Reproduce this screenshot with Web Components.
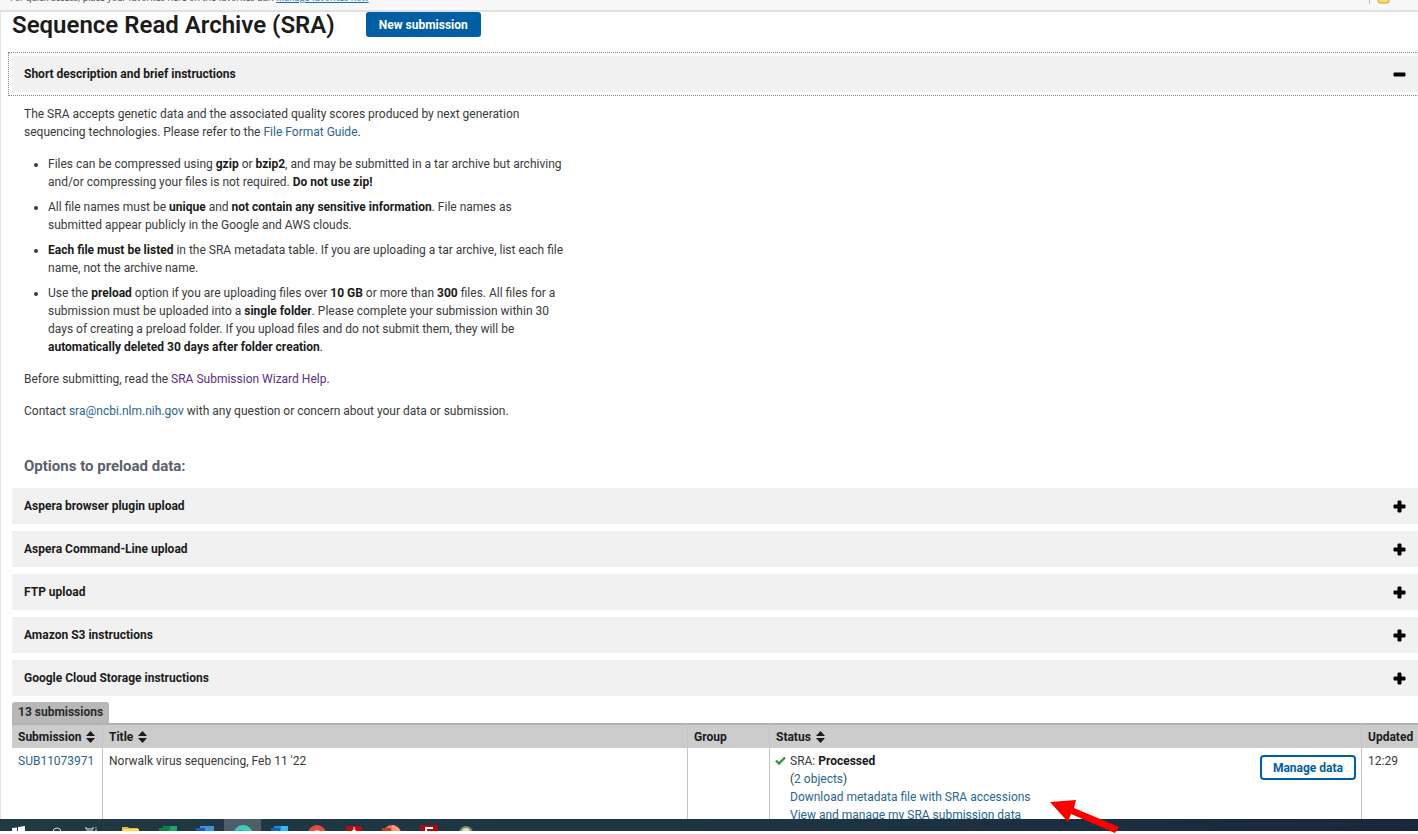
<!DOCTYPE html>
<html lang="en">
<head>
<meta charset="utf-8">
<title>Sequence Read Archive (SRA)</title>
<meta name="viewport" content="width=device-width, initial-scale=1">
<style>
  :root {
    --color-text: #3a3a3a;
    --color-strong: #1b1b1b;
    --color-link: #2a6591;
    --color-primary: #005ea2;
    --color-surface: #f1f1f1;
  }
  body {
    margin: 0;
    background: #fff;
    color: var(--color-text);
    font: 12px/18px Roboto, "Liberation Sans", sans-serif;
  }
</style>
</head>
<body>
<app-window>
  <favorites-bar slot="top"></favorites-bar>
  <page-header heading="Sequence Read Archive (SRA)" action="New submission"></page-header>
  <accordion-item label="Short description and brief instructions" open focused>
    <sra-instructions></sra-instructions>
  </accordion-item>
  <preload-options></preload-options>
  <submissions-table></submissions-table>
  <task-bar slot="bottom"></task-bar>
</app-window>

<script>
const makeTemplate = (html) => {
  const template = document.createElement('template');
  template.innerHTML = html;
  return template;
};

class BaseElement extends HTMLElement {
  constructor() {
    super();
    this.attachShadow({ mode: 'open' });
    this.shadowRoot.appendChild(this.constructor.template.content.cloneNode(true));
  }
}

class AppWindow extends BaseElement {
  static template = makeTemplate(`
<style>
  :host {
    position: relative;
    display: flex;
    flex-direction: column;
    height: 100vh;
    overflow: hidden;
  }
  main {
    flex: 1;
    min-height: 0;
    overflow: hidden;
    padding-left: 11px;
    border-left: 1px solid #e4e4e4;
  }
  .pointer {
    position: absolute;
    left: 1050px;
    bottom: 0;
    width: 70px;
    height: 35px;
  }
</style>
<slot name="top"></slot>
<main><slot></slot></main>
<slot name="bottom"></slot>
<svg class="pointer" viewBox="0 0 70 35" aria-hidden="true">
  <path d="M0 3 26 1 24 9 69 28 65 34 21 15 18 23Z" fill="#fe0000"/>
</svg>
`);
}

class FavoritesBar extends BaseElement {
  static template = makeTemplate(`
<style>
  :host {
    display: flex;
    align-items: flex-end;
    justify-content: space-between;
    box-sizing: border-box;
    height: 12px;
    padding: 0 0 6px 10px;
    overflow: hidden;
    background: #f7f7f7;
    border-bottom: 2px solid #dfe1e1;
    color: #444;
    font: 9px/12px "Open Sans", sans-serif;
    white-space: nowrap;
  }
  a { color: #1a6fc0; }
  .other {
    display: flex;
    align-items: flex-end;
    width: 49px;
    overflow: hidden;
    gap: 7px;
  }
  .other i {
    width: 1px;
    height: 12px;
    background: #b5b5b5;
  }
  svg { flex: none; }
</style>
<span>For quick access, place your favorites here on the favorites bar. <a href="#">Manage favorites now</a></span>
<span class="other">
  <i></i>
  <svg width="13" height="12" viewBox="0 0 13 12" aria-hidden="true"><path d="M1 1H5L7 3H12V9Q12 11 10 11H3Q1 11 1 9Z" fill="#f7dc6f" stroke="#c9a227"/></svg>
</span>
`);
}

class PageHeader extends BaseElement {
  static template = makeTemplate(`
<style>
  :host {
    display: flex;
    align-items: center;
    gap: 31px;
    height: 25px;
    margin-bottom: 19px;
  }
  h1 {
    margin: 0;
    color: var(--color-strong);
    font-size: 24px;
    font-weight: 600;
    line-height: 24px;
  }
  button {
    height: 25px;
    padding: 0 13px;
    border: none;
    border-radius: 3px;
    background: var(--color-primary);
    color: #fff;
    font: bold 12px/24px Roboto, sans-serif;
    cursor: pointer;
  }
</style>
<h1></h1>
<button type="button"></button>
`);

  connectedCallback() {
    this.shadowRoot.querySelector('h1').textContent = this.getAttribute('heading');
    this.shadowRoot.querySelector('button').textContent = this.getAttribute('action');
  }
}

class AccordionItem extends BaseElement {
  static template = makeTemplate(`
<style>
  :host { display: block; }
  button {
    display: flex;
    align-items: center;
    justify-content: space-between;
    width: 100%;
    height: 36px;
    padding: 0 12px;
    border: none;
    background: var(--color-surface);
    color: var(--color-strong);
    font: bold 12px/18px Roboto, sans-serif;
    text-align: left;
    cursor: pointer;
  }
  :host([focused]) button {
    outline: 1px dotted #888;
    outline-offset: 3px;
  }
  .minus { display: none; }
  :host([open]) .minus { display: block; }
  :host([open]) .plus { display: none; }
  .panel {
    display: none;
    padding: 13px 12px 12px;
  }
  :host([open]) .panel { display: block; }
</style>
<button type="button">
  <span></span>
  <svg width="13" height="13" viewBox="0 0 13 13" aria-hidden="true">
    <path class="plus" d="M5 1H8V5H12V8H8V12H5V8H1V5H5Z" stroke="#000" stroke-linejoin="round"/>
    <path class="minus" d="M1 5H12V8H1Z" stroke="#000" stroke-linejoin="round"/>
  </svg>
</button>
<div class="panel"><slot></slot></div>
`);

  connectedCallback() {
    const button = this.shadowRoot.querySelector('button');
    this.shadowRoot.querySelector('span').textContent = this.getAttribute('label');
    button.setAttribute('aria-expanded', this.hasAttribute('open'));
    button.addEventListener('click', () => {
      button.setAttribute('aria-expanded', this.toggleAttribute('open'));
    });
  }
}

class SraInstructions extends BaseElement {
  static template = makeTemplate(`
<style>
  :host {
    display: block;
    max-width: 542px;
  }
  p { margin: 0 0 14px; }
  ul {
    display: flex;
    flex-direction: column;
    gap: 7px;
    margin: 0 0 14px;
    padding-left: 24px;
  }
  b { color: var(--color-strong); }
  a {
    color: var(--color-link);
    text-decoration: none;
  }
  .visited { color: #5b2d87; }
</style>
<p>The SRA accepts genetic data and the associated quality scores produced by next generation sequencing technologies. Please refer to the <a href="#">File Format Guide</a>.</p>
<ul>
  <li>Files can be compressed using <b>gzip</b> or <b>bzip2</b>, and may be submitted in a tar archive but archiving and/or compressing your files is not required. <b>Do not use zip!</b></li>
  <li>All file names must be <b>unique</b> and <b>not contain any sensitive information</b>. File names as submitted appear publicly in the Google and AWS clouds.</li>
  <li><b>Each file must be listed</b> in the SRA metadata table. If you are uploading a tar archive, list each file name, not the archive name.</li>
  <li>Use the <b>preload</b> option if you are uploading files over <b>10 GB</b> or more than <b>300</b> files. All files for a submission must be uploaded into a <b>single folder</b>. Please complete your submission within 30 days of creating a preload folder. If you upload files and do not submit them, they will be <b>automatically deleted 30 days after folder creation</b>.</li>
</ul>
<p>Before submitting, read the <a class="visited" href="#">SRA Submission Wizard Help</a>.</p>
<p>Contact <a href="#">sra@ncbi.nlm.nih.gov</a> with any question or concern about your data or submission.</p>
`);
}

class PreloadOptions extends BaseElement {
  static template = makeTemplate(`
<style>
  :host {
    display: flex;
    flex-direction: column;
    gap: 7px;
    padding-top: 10px;
  }
  h2 {
    margin: 0 12px 5px;
    color: #5b616b;
    font-size: 15px;
    font-weight: bold;
    line-height: 20px;
  }
</style>
<h2>Options to preload data:</h2>
<accordion-item label="Aspera browser plugin upload"></accordion-item>
<accordion-item label="Aspera Command-Line upload"></accordion-item>
<accordion-item label="FTP upload"></accordion-item>
<accordion-item label="Amazon S3 instructions"></accordion-item>
<accordion-item label="Google Cloud Storage instructions"></accordion-item>
`);
}

const sortIcon = `
<svg width="9" height="12" viewBox="0 0 9 12" aria-hidden="true"><path d="M4.5 0 9 5H0ZM4.5 12 0 7H9Z" fill="#1b1b1b"/></svg>`;

class SubmissionsTable extends BaseElement {
  static template = makeTemplate(`
<style>
  :host {
    display: block;
    margin-top: 6px;
  }
  .count {
    width: fit-content;
    padding: 1px 6px 2px;
    border-radius: 3px 3px 0 0;
    background: #b8b8b8;
    color: #2b2b2b;
    font-weight: bold;
  }
  table {
    width: 100%;
    border-collapse: separate;
    border-spacing: 0;
    table-layout: fixed;
  }
  th {
    height: 23px;
    padding: 0 6px;
    background: #ccc;
    border-top: 2px solid #b1b1b1;
    color: #1b1b1b;
    text-align: left;
  }
  th svg {
    margin-left: 2px;
    vertical-align: -2px;
  }
  td {
    height: 90px;
    padding: 4px 6px;
    vertical-align: top;
  }
  th + th, td + td { border-left: 1px solid #c4c4c4; }
  .id { width: 78px; }
  .group { width: 69px; }
  .status { width: 579px; }
  .updated { width: 44px; }
  a {
    color: var(--color-link);
    text-decoration: none;
  }
  .job {
    display: grid;
    grid-template-columns: 10px 1fr auto;
    gap: 5px;
    margin: 0 -1px;
  }
  .job svg { margin-top: 4px; }
  .job b { color: var(--color-strong); }
  .lines {
    display: flex;
    flex-direction: column;
  }
  button {
    height: 25px;
    margin-top: 3px;
    padding: 0 11px;
    border: 2px solid var(--color-primary);
    border-radius: 4px;
    background: #fff;
    color: var(--color-primary);
    font: bold 12px/18px Roboto, sans-serif;
    cursor: pointer;
  }
</style>
<div class="count">13 submissions</div>
<table>
  <thead>
    <tr>
      <th class="id">Submission ${sortIcon}</th>
      <th>Title ${sortIcon}</th>
      <th class="group">Group</th>
      <th class="status">Status ${sortIcon}</th>
      <th class="updated">Updated</th>
    </tr>
  </thead>
  <tbody>
    <tr>
      <td><a href="#">SUB11073971</a></td>
      <td>Norwalk virus sequencing, Feb 11 '22</td>
      <td></td>
      <td>
        <div class="job">
          <svg width="11" height="10" viewBox="0 0 11 10" aria-hidden="true"><path d="M1 4.5 4 7.5 10 1.5" fill="none" stroke="#35933f" stroke-width="2.4"/></svg>
          <div class="lines">
            <span>SRA: <b>Processed</b></span>
            <span>(<a href="#">2 objects</a>)</span>
            <a href="#">Download metadata file with SRA accessions</a>
            <a href="#">View and manage my SRA submission data</a>
          </div>
          <div><button type="button">Manage data</button></div>
        </div>
      </td>
      <td>12:29</td>
    </tr>
  </tbody>
</table>
`);
}

class TaskBar extends BaseElement {
  static template = makeTemplate(`
<style>
  :host {
    display: block;
    padding-bottom: 3px;
    background: #fff;
  }
  nav {
    display: flex;
    height: 12px;
    overflow: hidden;
    background: linear-gradient(90deg, #203943, #1d3342 60%, #1a273c);
  }
  span {
    flex: none;
    width: 37px;
    height: 12px;
  }
  .active { background: #4d5e68; }
  svg { display: block; }
</style>
<nav>
  <span><svg width="37" height="12"><path d="M12 9 17 8.5V12H12ZM18 8 25 7V12H18Z" fill="#fff"/></svg></span>
  <span><svg width="37" height="12"><circle cx="20" cy="13" r="4" fill="none" stroke="#d5dcdf"/></svg></span>
  <span><svg width="37" height="12"><path d="M12 8V10H19V8M12 12H19M22 8V9M22 10V12" fill="none" stroke="#e4eaec"/></svg></span>
  <span><svg width="37" height="12"><path d="M11 8H17L18 9H27V12H11Z" fill="#efb52c"/><path d="M12 10H28V12H12Z" fill="#ffd866"/></svg></span>
  <span><svg width="37" height="12"><path d="M15 7H29V12H15Z" fill="#21a366"/><path d="M15 7H22V12H15Z" fill="#12834b"/><path d="M11 9H20V12H11Z" fill="#107c41"/></svg></span>
  <span><svg width="37" height="12"><path d="M15 7H29V12H15Z" fill="#3f8fe5"/><path d="M11 9H20V12H11Z" fill="#185abd"/></svg></span>
  <span style="width:2px"></span>
  <span class="active"><svg width="37" height="12"><circle cx="19" cy="16" r="10" fill="#27a5df"/><path d="M15 7Q25 4 29 14L21 12Q16 10 11 12Q12 9 15 7Z" fill="#42cdb0"/></svg></span>
  <span><svg width="37" height="12"><path d="M13 7H27V12H13Z" fill="#1490df"/><path d="M20 7H27V12H20Z" fill="#35b8f1"/><path d="M10 9H19V12H10Z" fill="#0f66bd"/></svg></span>
  <span><svg width="37" height="12"><circle cx="19" cy="15" r="9" fill="#e64c3c"/><circle cx="19" cy="16" r="5" fill="#f4b0a4"/></svg></span>
  <span><svg width="37" height="12"><rect x="11" y="7" width="16" height="9" rx="2" fill="#b60d13"/><path d="M19 8V12M17 12 21 11" stroke="#fff"/></svg></span>
  <span><svg width="37" height="12"><circle cx="20" cy="15" r="9" fill="#f17b5a"/><path d="M20 6A9 9 0 0 1 29 15H20Z" fill="#ff9b7d"/><path d="M10 9H19V12H10Z" fill="#c43e1c"/></svg></span>
  <span><svg width="37" height="12"><rect x="11" y="6" width="18" height="9" rx="1" fill="#b3060d"/><path d="M17 12V9H24" fill="none" stroke="#fff" stroke-width="2"/></svg></span>
  <span><svg width="37" height="12"><circle cx="20" cy="14" r="7" fill="#789067"/><circle cx="20" cy="13" r="4" fill="#dce0c4"/></svg></span>
</nav>
`);
}

customElements.define('app-window', AppWindow);
customElements.define('favorites-bar', FavoritesBar);
customElements.define('page-header', PageHeader);
customElements.define('accordion-item', AccordionItem);
customElements.define('sra-instructions', SraInstructions);
customElements.define('preload-options', PreloadOptions);
customElements.define('submissions-table', SubmissionsTable);
customElements.define('task-bar', TaskBar);
</script>
</body>
</html>
